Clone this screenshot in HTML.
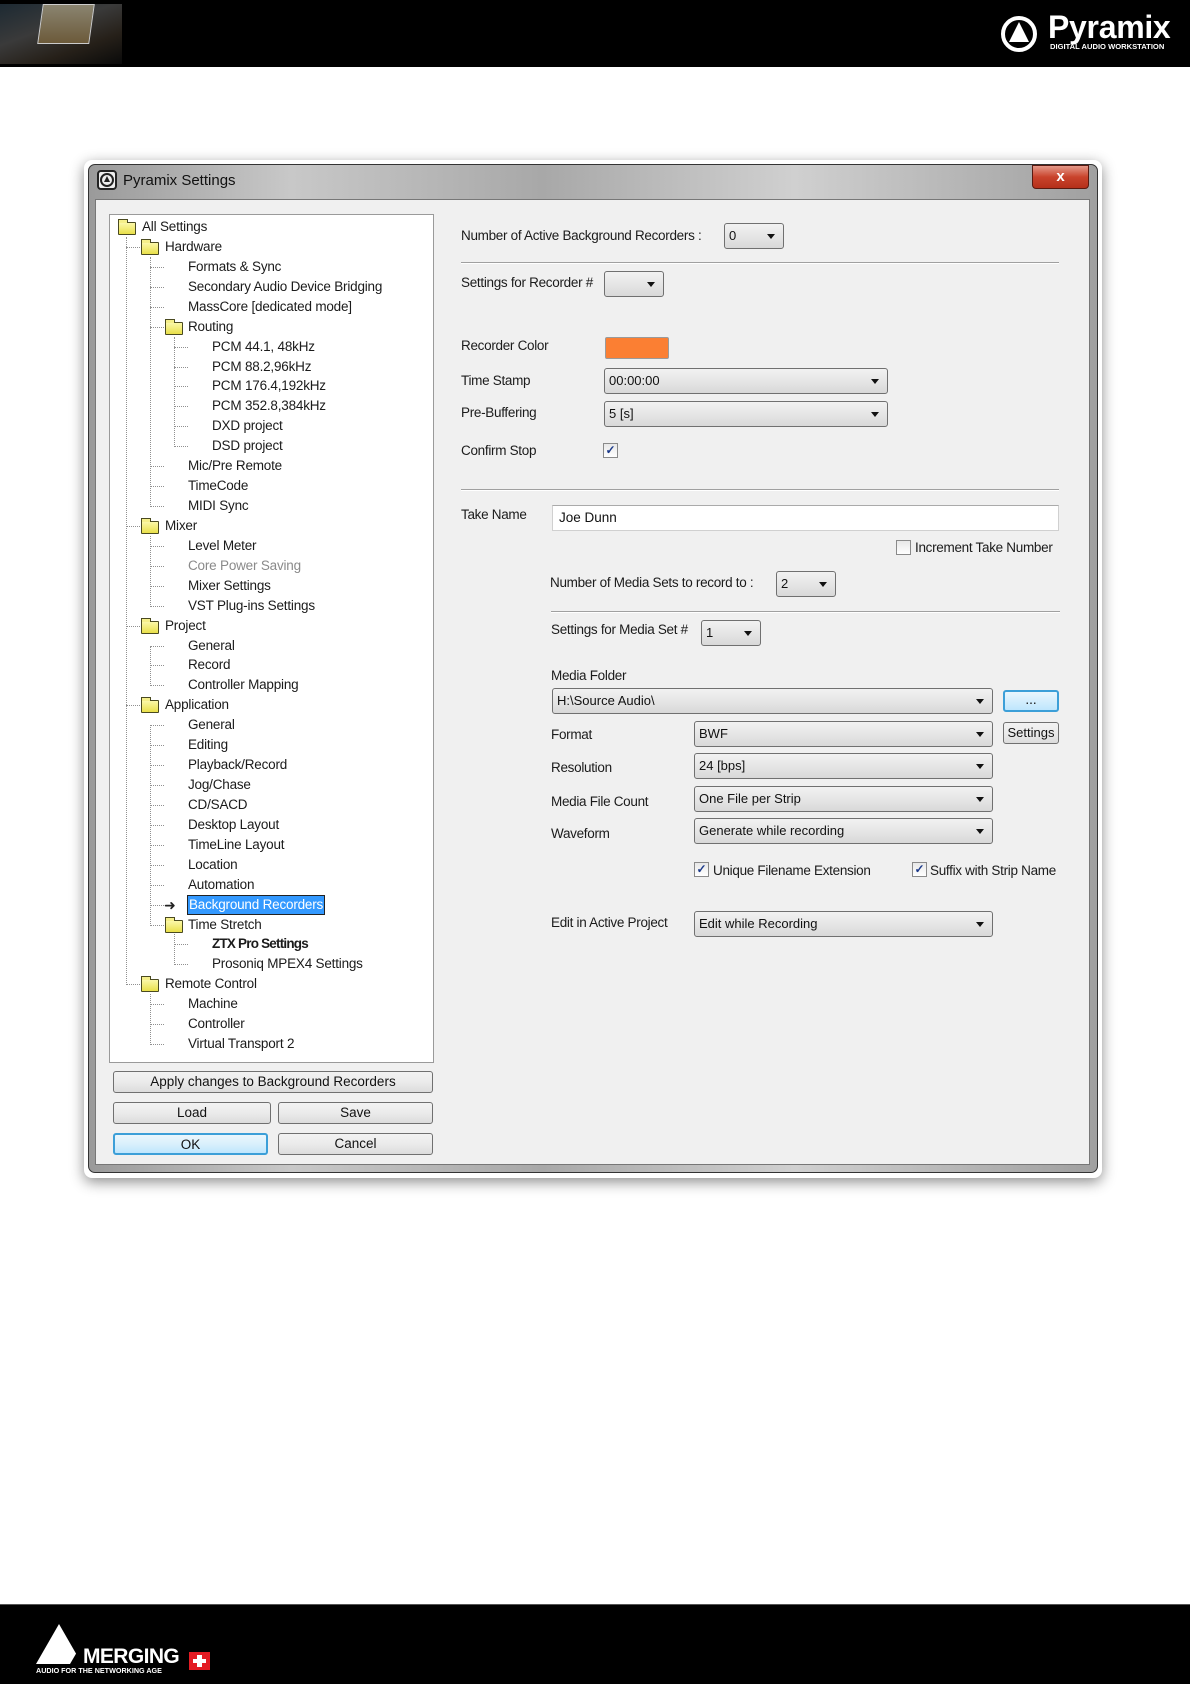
<!DOCTYPE html>
<html><head><meta charset="utf-8"><style>
*{margin:0;padding:0;box-sizing:border-box}
body{width:1190px;height:1684px;background:#fff;position:relative;overflow:hidden;font-family:"Liberation Sans",sans-serif;}
.a{position:absolute}
.t{position:absolute;font-size:13.5px;color:#1b1b1b;white-space:nowrap;line-height:20px;letter-spacing:-0.2px}
.lbl{position:absolute;font-size:13.5px;color:#1b1b1b;white-space:nowrap;letter-spacing:-0.3px;line-height:16px}
.cb{position:absolute;border:1px solid #707070;border-radius:3px;background:linear-gradient(#f2f2f2,#e6e6e6 50%,#d8d8d8);font-size:13px;color:#111;padding-left:4px;line-height:24px;white-space:nowrap}
.cb:after{content:"";position:absolute;right:8px;top:50%;margin-top:-2px;border-left:4px solid transparent;border-right:4px solid transparent;border-top:5px solid #111}
.btn{position:absolute;border:1px solid #707070;border-radius:3px;background:linear-gradient(#f2f2f2,#ebebeb 50%,#dcdcdc);font-size:13.5px;color:#111;text-align:center;line-height:20px}
.chk{position:absolute;width:15px;height:15px;border:1px solid #8a8a8a;background:linear-gradient(#e8e8e8,#fff);font-size:12px;line-height:13px;text-align:center;color:#1c3a8a;font-weight:bold}
.sep{position:absolute;height:2px;border-top:1px solid #a0a0a0;border-bottom:1px solid #fff}
.vl{position:absolute;width:0;border-left:1px dotted #909090}
.hl{position:absolute;height:0;border-top:1px dotted #909090;width:14px}
.fd{position:absolute;width:18px;height:13px;background:linear-gradient(#fbf7a8,#e9e04a);border:1px solid #4a4a20;border-radius:1px}
.fd:before{content:"";position:absolute;left:-1px;top:-4px;width:8px;height:3px;border:1px solid #4a4a20;border-bottom:none;background:#f5ef8a}
</style></head><body>
<!-- header -->
<div class="a" style="left:0;top:0;width:1190px;height:67px;background:#000"></div>
<div class="a" style="left:0;top:4px;width:122px;height:60px;background:linear-gradient(160deg,#1d2a33,#3a3a3a 40%,#262019 70%,#0a0a0a)"></div>
<div class="a" style="left:40px;top:4px;width:52px;height:40px;background:linear-gradient(#8a8470,#6c5a3a);transform:skewX(-8deg);border:1px solid #ccc"></div>
<div class="a" style="left:1001px;top:16px;width:36px;height:36px;border:4px solid #fff;border-radius:50%"></div>
<div class="a" style="left:1009px;top:22px;width:0;height:0;border-left:10px solid transparent;border-right:10px solid transparent;border-bottom:20px solid #fff"></div>
<div class="a" style="left:1048px;top:9px;font-size:32px;font-weight:bold;color:#fff;letter-spacing:-0.3px">Pyramix</div>
<div class="a" style="left:1050px;top:42px;font-size:7.6px;font-weight:bold;color:#fff;white-space:nowrap">DIGITAL AUDIO WORKSTATION</div>

<!-- dialog frame -->
<div class="a" style="left:84px;top:160px;width:1018px;height:1018px;border-radius:8px;box-shadow:0 4px 14px rgba(0,0,0,0.45)"></div>
<div class="a" style="left:88px;top:164px;width:1010px;height:1009px;border:1px solid #333;border-radius:7px;background:linear-gradient(90deg,#9a9a9a,#c8c8c8 20%,#a8a8a8 45%,#d0d0d0 70%,#a0a0a0)"></div>
<div class="a" style="left:97px;top:170px;width:20px;height:20px;border:2px solid #222;border-radius:4px;background:#eee"></div>
<div class="a" style="left:100px;top:173px;width:14px;height:14px;border:2px solid #222;border-radius:50%"></div>
<div class="a" style="left:104px;top:176px;border-left:3px solid transparent;border-right:3px solid transparent;border-bottom:6px solid #222"></div>
<div class="a" style="left:123px;top:172px;font-size:15px;color:#111">Pyramix Settings</div>
<div class="a" style="left:1032px;top:165px;width:57px;height:24px;border:1px solid #5a1a10;border-radius:0 0 4px 4px;background:linear-gradient(#e59a8a,#c9432c 50%,#b5301a);color:#fff;font-weight:bold;text-align:center;font-size:15px;line-height:22px">x</div>
<div class="a" style="left:95px;top:199px;width:995px;height:966px;background:#f0f0f0;border:1px solid #777"></div>

<!-- tree -->
<div class="a" style="left:109px;top:214px;width:325px;height:849px;background:#fff;border:1px solid #9a9a9a"></div>
<div class="vl" style="left:126px;top:237px;height:748px"></div>
<div class="vl" style="left:150px;top:257px;height:250px"></div>
<div class="vl" style="left:150px;top:536px;height:71px"></div>
<div class="vl" style="left:150px;top:646px;height:40px"></div>
<div class="vl" style="left:150px;top:725px;height:201px"></div>
<div class="vl" style="left:150px;top:994px;height:51px"></div>
<div class="vl" style="left:174px;top:337px;height:110px"></div>
<div class="vl" style="left:174px;top:934px;height:31px"></div>
<div class="hl" style="left:126px;top:247px"></div><div class="hl" style="left:126px;top:526px"></div><div class="hl" style="left:126px;top:626px"></div><div class="hl" style="left:126px;top:705px"></div><div class="hl" style="left:126px;top:984px"></div>
<div class="hl" style="left:150px;top:267px"></div><div class="hl" style="left:150px;top:287px"></div><div class="hl" style="left:150px;top:307px"></div><div class="hl" style="left:150px;top:327px"></div><div class="hl" style="left:150px;top:466px"></div><div class="hl" style="left:150px;top:486px"></div><div class="hl" style="left:150px;top:506px"></div>
<div class="hl" style="left:150px;top:546px"></div><div class="hl" style="left:150px;top:566px"></div><div class="hl" style="left:150px;top:586px"></div><div class="hl" style="left:150px;top:606px"></div>
<div class="hl" style="left:150px;top:646px"></div><div class="hl" style="left:150px;top:665px"></div><div class="hl" style="left:150px;top:685px"></div>
<div class="hl" style="left:150px;top:725px"></div><div class="hl" style="left:150px;top:745px"></div><div class="hl" style="left:150px;top:765px"></div><div class="hl" style="left:150px;top:785px"></div><div class="hl" style="left:150px;top:805px"></div><div class="hl" style="left:150px;top:825px"></div><div class="hl" style="left:150px;top:845px"></div><div class="hl" style="left:150px;top:865px"></div><div class="hl" style="left:150px;top:885px"></div><div class="hl" style="left:150px;top:905px"></div><div class="hl" style="left:150px;top:925px"></div>
<div class="hl" style="left:150px;top:1004px"></div><div class="hl" style="left:150px;top:1024px"></div><div class="hl" style="left:150px;top:1044px"></div>
<div class="hl" style="left:174px;top:347px"></div><div class="hl" style="left:174px;top:367px"></div><div class="hl" style="left:174px;top:386px"></div><div class="hl" style="left:174px;top:406px"></div><div class="hl" style="left:174px;top:426px"></div><div class="hl" style="left:174px;top:446px"></div>
<div class="hl" style="left:174px;top:944px"></div><div class="hl" style="left:174px;top:964px"></div>
<div class="fd" style="left:118px;top:222px"></div>
<div class="fd" style="left:141px;top:242px"></div>
<div class="fd" style="left:165px;top:322px"></div>
<div class="fd" style="left:141px;top:521px"></div>
<div class="fd" style="left:141px;top:621px"></div>
<div class="fd" style="left:141px;top:700px"></div>
<div class="fd" style="left:165px;top:920px"></div>
<div class="fd" style="left:141px;top:979px"></div>
<div class="a" style="left:164px;top:897px;font-size:14px;color:#222">&#10140;</div>

<div class="t" style="left:142px;top:217px">All Settings</div>
<div class="t" style="left:165px;top:237px">Hardware</div>
<div class="t" style="left:188px;top:257px">Formats &amp; Sync</div>
<div class="t" style="left:188px;top:277px">Secondary Audio Device Bridging</div>
<div class="t" style="left:188px;top:297px">MassCore [dedicated mode]</div>
<div class="t" style="left:188px;top:317px">Routing</div>
<div class="t" style="left:212px;top:337px">PCM 44.1, 48kHz</div>
<div class="t" style="left:212px;top:357px">PCM 88.2,96kHz</div>
<div class="t" style="left:212px;top:376px">PCM 176.4,192kHz</div>
<div class="t" style="left:212px;top:396px">PCM 352.8,384kHz</div>
<div class="t" style="left:212px;top:416px">DXD project</div>
<div class="t" style="left:212px;top:436px">DSD project</div>
<div class="t" style="left:188px;top:456px">Mic/Pre Remote</div>
<div class="t" style="left:188px;top:476px">TimeCode</div>
<div class="t" style="left:188px;top:496px">MIDI Sync</div>
<div class="t" style="left:165px;top:516px">Mixer</div>
<div class="t" style="left:188px;top:536px">Level Meter</div>
<div class="t" style="left:188px;top:556px;color:#8a8a8a">Core Power Saving</div>
<div class="t" style="left:188px;top:576px">Mixer Settings</div>
<div class="t" style="left:188px;top:596px">VST Plug-ins Settings</div>
<div class="t" style="left:165px;top:616px">Project</div>
<div class="t" style="left:188px;top:636px">General</div>
<div class="t" style="left:188px;top:655px">Record</div>
<div class="t" style="left:188px;top:675px">Controller Mapping</div>
<div class="t" style="left:165px;top:695px">Application</div>
<div class="t" style="left:188px;top:715px">General</div>
<div class="t" style="left:188px;top:735px">Editing</div>
<div class="t" style="left:188px;top:755px">Playback/Record</div>
<div class="t" style="left:188px;top:775px">Jog/Chase</div>
<div class="t" style="left:188px;top:795px">CD/SACD</div>
<div class="t" style="left:188px;top:815px">Desktop Layout</div>
<div class="t" style="left:188px;top:835px">TimeLine Layout</div>
<div class="t" style="left:188px;top:855px">Location</div>
<div class="t" style="left:188px;top:875px">Automation</div>
<div class="t" style="left:187px;top:895px;background:#3399ff;color:#fff;border:1px solid #222;padding:0 1px;line-height:18px">Background Recorders</div>
<div class="t" style="left:188px;top:915px">Time Stretch</div>
<div class="t" style="left:212px;top:934px;font-weight:bold;letter-spacing:-0.8px">ZTX Pro Settings</div>
<div class="t" style="left:212px;top:954px">Prosoniq MPEX4 Settings</div>
<div class="t" style="left:165px;top:974px">Remote Control</div>
<div class="t" style="left:188px;top:994px">Machine</div>
<div class="t" style="left:188px;top:1014px">Controller</div>
<div class="t" style="left:188px;top:1034px">Virtual Transport 2</div>

<!-- buttons left -->
<div class="btn" style="left:113px;top:1071px;width:320px;height:22px">Apply changes to Background Recorders</div>
<div class="btn" style="left:113px;top:1102px;width:158px;height:22px">Load</div>
<div class="btn" style="left:278px;top:1102px;width:155px;height:22px">Save</div>
<div class="btn" style="left:113px;top:1133px;width:155px;height:22px;border:2px solid #3c9fd8;background:linear-gradient(#eaf6fd,#d9f0fc 50%,#bee6fd)">OK</div>
<div class="btn" style="left:278px;top:1133px;width:155px;height:22px">Cancel</div>

<!-- right panel -->
<div class="lbl" style="left:461px;top:228px">Number of Active Background Recorders :</div>
<div class="cb" style="left:724px;top:223px;width:60px;height:26px">0</div>
<div class="sep" style="left:461px;top:262px;width:598px"></div>
<div class="lbl" style="left:461px;top:275px">Settings for Recorder #</div>
<div class="cb" style="left:604px;top:271px;width:60px;height:26px"></div>
<div class="lbl" style="left:461px;top:338px">Recorder Color</div>
<div class="a" style="left:605px;top:337px;width:64px;height:22px;background:#fb7f33;border:1px solid #9a9a9a;border-radius:2px"></div>
<div class="lbl" style="left:461px;top:373px">Time Stamp</div>
<div class="cb" style="left:604px;top:368px;width:284px;height:26px">00:00:00</div>
<div class="lbl" style="left:461px;top:405px">Pre-Buffering</div>
<div class="cb" style="left:604px;top:401px;width:284px;height:26px">5 [s]</div>
<div class="lbl" style="left:461px;top:443px">Confirm Stop</div>
<div class="chk" style="left:603px;top:443px">&#10003;</div>
<div class="sep" style="left:461px;top:489px;width:598px"></div>
<div class="lbl" style="left:461px;top:507px">Take Name</div>
<div class="a" style="left:552px;top:505px;width:507px;height:26px;background:#fff;border:1px solid #d0d0d0;border-top-color:#aaa;font-size:13.5px;line-height:24px;padding-left:6px;color:#111">Joe Dunn</div>
<div class="chk" style="left:896px;top:540px"></div>
<div class="lbl" style="left:915px;top:540px">Increment Take Number</div>
<div class="lbl" style="left:550px;top:575px">Number of Media Sets to record to :</div>
<div class="cb" style="left:776px;top:571px;width:60px;height:26px">2</div>
<div class="sep" style="left:551px;top:611px;width:509px"></div>
<div class="lbl" style="left:551px;top:622px">Settings for Media Set #</div>
<div class="cb" style="left:701px;top:620px;width:60px;height:26px">1</div>
<div class="lbl" style="left:551px;top:668px">Media Folder</div>
<div class="cb" style="left:552px;top:688px;width:441px;height:26px">H:\Source Audio\</div>
<div class="btn" style="left:1003px;top:690px;width:56px;height:22px;border:2px solid #3c9fd8;background:linear-gradient(#eaf6fd,#bee6fd);line-height:16px">...</div>
<div class="lbl" style="left:551px;top:727px">Format</div>
<div class="cb" style="left:694px;top:721px;width:299px;height:26px">BWF</div>
<div class="btn" style="left:1003px;top:722px;width:56px;height:22px;font-size:13px">Settings</div>
<div class="lbl" style="left:551px;top:760px">Resolution</div>
<div class="cb" style="left:694px;top:753px;width:299px;height:26px">24 [bps]</div>
<div class="lbl" style="left:551px;top:794px">Media File Count</div>
<div class="cb" style="left:694px;top:786px;width:299px;height:26px">One File per Strip</div>
<div class="lbl" style="left:551px;top:826px">Waveform</div>
<div class="cb" style="left:694px;top:818px;width:299px;height:26px">Generate while recording</div>
<div class="chk" style="left:694px;top:862px">&#10003;</div>
<div class="lbl" style="left:713px;top:863px">Unique Filename Extension</div>
<div class="chk" style="left:912px;top:862px">&#10003;</div>
<div class="lbl" style="left:930px;top:863px">Suffix with Strip Name</div>
<div class="lbl" style="left:551px;top:915px">Edit in Active Project</div>
<div class="cb" style="left:694px;top:911px;width:299px;height:26px">Edit while Recording</div>

<!-- footer -->
<div class="a" style="left:0;top:1604px;width:1190px;height:80px;background:#000;border-top:1px solid #555"></div>
<div class="a" style="left:36px;top:1624px;width:0;height:0;border-left:23px solid transparent;border-right:23px solid transparent;border-bottom:40px solid #fff"></div>
<div class="a" style="left:70px;top:1652px;width:0;height:0;border-left:7px solid transparent;border-right:7px solid #000;border-bottom:12px solid #000"></div>
<div class="a" style="left:83px;top:1647px;font-size:21px;font-weight:bold;color:#fff;letter-spacing:-0.6px;line-height:19px">MERGING</div>
<div class="a" style="left:36px;top:1666px;font-size:7.2px;font-weight:bold;color:#fff;white-space:nowrap">AUDIO FOR THE NETWORKING AGE</div>
<div class="a" style="left:189px;top:1652px;width:21px;height:18px;background:#e31b23"></div>
<div class="a" style="left:197px;top:1655px;width:5px;height:12px;background:#fff"></div>
<div class="a" style="left:193px;top:1659px;width:13px;height:4px;background:#fff"></div>
</body></html>
